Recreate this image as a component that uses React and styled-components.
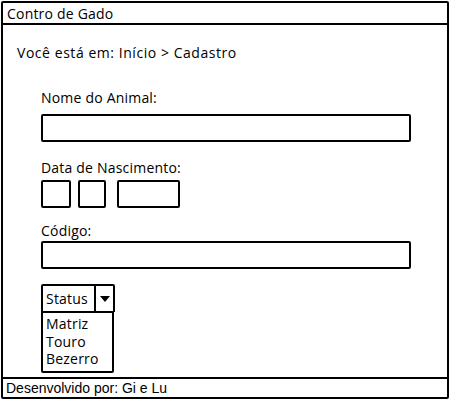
import React from 'react';
import styled, { createGlobalStyle } from 'styled-components';

const GlobalStyle = createGlobalStyle`
  body {
    margin: 0;
    background: #fff;
    font-family: "Open Sans", Lato, sans-serif;
    letter-spacing: 0.2px;
    color: #000;
  }
`;

const Frame = styled.div`
  box-sizing: border-box;
  width: 448px;
  height: 398px;
  margin: 1px;
  border: 2px solid #000;
  border-radius: 2px;
  display: flex;
  flex-direction: column;
`;

const Bar = styled.div`
  box-sizing: border-box;
  height: ${props => props.height}px;
  display: flex;
  align-items: center;
  padding-left: ${props => props.plain ? 3 : 4}px;
  font-size: 14px;
  ${props => props.plain && 'font-family: "Liberation Sans", Arial, sans-serif; letter-spacing: 0;'}
  ${props => props.top ? 'border-bottom: 2px solid #000;' : 'border-top: 2px solid #000;'}
`;

const Content = styled.div`
  flex: 1;
  display: flex;
  flex-direction: column;
  padding: 19px 0 0 14px;
`;

const Breadcrumb = styled.div`
  font-size: 14px;
  line-height: 17px;
  letter-spacing: 0.55px;
`;

const Form = styled.div`
  display: flex;
  flex-direction: column;
  align-items: flex-start;
  padding-left: 24px;
  margin-top: 28px;
`;

const Label = styled.div`
  font-size: 14px;
  line-height: 17px;
  margin-top: ${props => props.mt || 0}px;
`;

const Box = styled.div`
  box-sizing: border-box;
  width: ${props => props.w}px;
  height: 28px;
  border: 2px solid #000;
  border-radius: 2px;
  margin-top: ${props => props.mt || 0}px;
`;

const DateRow = styled.div`
  display: flex;
  gap: 7px;
  margin-top: 4px;
  & > div:nth-child(2) { margin-right: 4px; }
`;

const Select = styled.div`
  box-sizing: border-box;
  width: 74px;
  height: 28px;
  margin-top: 15px;
  border: 2px solid #000;
  border-bottom-width: 1px;
  border-radius: 2px 2px 0 0;
  display: flex;
  font-size: 14px;
`;

const SelectText = styled.div`
  flex: 1;
  display: flex;
  align-items: center;
  padding-left: 3px;
  border-right: 2px solid #000;
`;

const Arrow = styled.div`
  width: 17px;
  display: flex;
  align-items: center;
  justify-content: center;
  &::after {
    content: '';
    border-left: 5px solid transparent;
    border-right: 5px solid transparent;
    border-top: 6px solid #000;
  }
`;

const List = styled.div`
  box-sizing: border-box;
  width: 73px;
  height: 61px;
  border: 2px solid #000;
  border-top-width: 1px;
  border-radius: 0 0 2px 2px;
  padding: 2px 0 0 3px;
  font-size: 14px;
  line-height: 17.5px;
`;

export default function App() {
  return (
    <>
      <GlobalStyle />
      <Frame>
        <Bar top height={22}>Contro de Gado</Bar>
        <Content>
          <Breadcrumb>Você está em: Início &gt; Cadastro</Breadcrumb>
          <Form>
            <Label>Nome do Animal:</Label>
            <Box w={370} mt={8} />
            <Label mt={17}>Data de Nascimento:</Label>
            <DateRow>
              <Box w={30} />
              <Box w={28} />
              <Box w={63} />
            </DateRow>
            <Label mt={14}>Código:</Label>
            <Box w={370} mt={2} />
            <Select>
              <SelectText>Status</SelectText>
              <Arrow />
            </Select>
            <List>
              <div>Matriz</div>
              <div>Touro</div>
              <div>Bezerro</div>
            </List>
          </Form>
        </Content>
        <Bar plain height={20}>Desenvolvido por: Gi e Lu</Bar>
      </Frame>
    </>
  );
}
